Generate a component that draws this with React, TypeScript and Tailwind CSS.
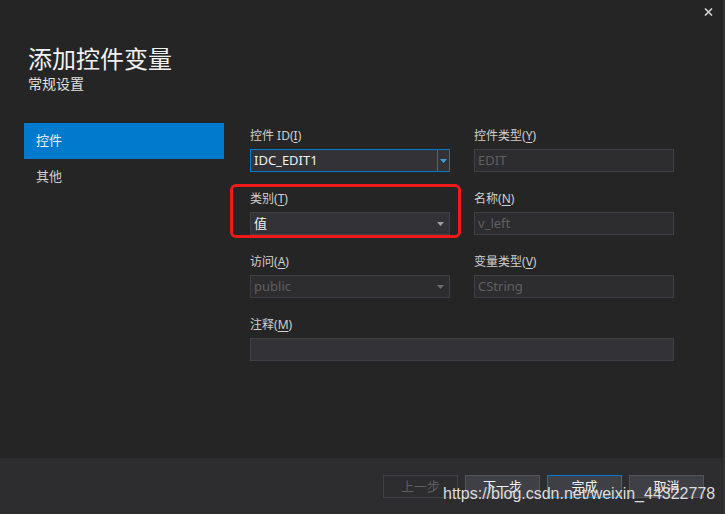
import React from "react";

const font = '"Noto Sans", "Noto Sans CJK SC", sans-serif';

function Arrow({ color }: { color: string }) {
  return (
    <svg width="7" height="4" viewBox="0 0 7 4">
      <path d="M0 0 L7 0 L3.5 4 Z" fill={color} />
    </svg>
  );
}

function Label({ text, hot }: { text: string; hot: string }) {
  return (
    <div className="h-[18px] text-[12px] leading-[18px] text-[#d0d0d0]">
      {text}(<span className="underline underline-offset-2">{hot}</span>)
    </div>
  );
}

function Field({
  label,
  hot,
  value,
  disabled,
  combo,
  focused,
}: {
  label: string;
  hot: string;
  value?: string;
  disabled?: boolean;
  combo?: boolean;
  focused?: boolean;
}) {
  return (
    <div className="flex flex-col gap-[4px]">
      <Label text={label} hot={hot} />
      <div
        className={
          "flex h-[23px] items-center border " +
          (focused
            ? "border-[#007acc] bg-[#333337]"
            : disabled
            ? "border-[#3f3f46] bg-[#2d2d30]"
            : "border-[#3f3f46] bg-[#333337]")
        }
      >
        <span
          className={
            "flex-1 pl-[3px] text-[13px] leading-[21px] " +
            (disabled ? "text-[#5f5f62]" : "text-[#f1f1f1]")
          }
        >
          {value}
        </span>
        {combo && (
          <span
            className={
              "flex h-full w-[12px] items-center justify-center " +
              (focused ? "border-l border-[#007acc]" : "mr-[3px]")
            }
          >
            <Arrow color={focused ? "#3c9fdf" : disabled ? "#6b6b6e" : "#a0a0a0"} />
          </span>
        )}
      </div>
    </div>
  );
}

function Btn({ text, disabled, primary }: { text: string; disabled?: boolean; primary?: boolean }) {
  return (
    <div
      className={
        "flex h-[23px] w-[75px] items-center justify-center border text-[13px] " +
        (disabled
          ? "border-[#3f3f46] bg-[#2d2d30] text-[#5f5f62]"
          : primary
          ? "border-[#007acc] bg-[#3f3f46] text-[#f1f1f1]"
          : "border-[#555555] bg-[#3f3f46] text-[#f1f1f1]")
      }
    >
      {text}
    </div>
  );
}

export default function App() {
  return (
    <div
      className="relative flex h-[514px] w-[725px] flex-col overflow-hidden border-r-2 border-[#333337] bg-[#252526]"
      style={{ fontFamily: font }}
    >
      <div className="flex h-[44px] justify-end pr-[10px] pt-[8px]">
        <svg width="9" height="8" viewBox="0 0 9 8">
          <path d="M1 0.5 L8 7.5 M8 0.5 L1 7.5" stroke="#d4d4d4" strokeWidth="1.6" />
        </svg>
      </div>

      <div className="px-[28px]">
        <div className="text-[24px] leading-[30px] text-[#f1f1f1]">添加控件变量</div>
        <div className="text-[14px] leading-[20px] text-[#e0e0e0]">常规设置</div>
      </div>

      <div className="mt-[29px] flex flex-1">
        <div className="ml-[24px] w-[200px]">
          <div className="flex h-[36px] items-center bg-[#007acc] pl-[12px] text-[13px] text-[#f1f1f1]">
            控件
          </div>
          <div className="flex h-[36px] items-center pl-[12px] text-[13px] text-[#d0d0d0]">其他</div>
        </div>

        <div className="ml-[26px] grid w-[424px] grid-cols-2 content-start gap-x-[24px] gap-y-[18px] pt-[4px]">
          <Field label="控件 ID" hot="I" value="IDC_EDIT1" combo focused />
          <Field label="控件类型" hot="Y" value="EDIT" disabled />
          <div className="relative">
            <Field label="类别" hot="T" value="值" combo />
            <div className="absolute bottom-[-3px] left-[-20px] right-[-11px] top-[-6px] rounded-[6px] border-[3px] border-[#f01818]" />
          </div>
          <Field label="名称" hot="N" value="v_left" disabled />
          <Field label="访问" hot="A" value="public" combo disabled />
          <Field label="变量类型" hot="V" value="CString" disabled />
          <div className="col-span-2">
            <Field label="注释" hot="M" value="" />
          </div>
        </div>
      </div>

      <div className="flex h-[56px] justify-end gap-[7px] bg-[#2d2d30] pr-[19px] pt-[17px]">
        <Btn text="上一步" disabled />
        <Btn text="下一步" />
        <Btn text="完成" primary />
        <Btn text="取消" />
      </div>

      <div
        className="absolute left-[443px] top-[485px] text-[16px] leading-[18px] text-[#dcdcdc]"
        style={{ fontFamily: '"Liberation Sans", Arial, sans-serif' }}
      >
        https://blog.csdn.net/weixin_44322778
      </div>
    </div>
  );
}
